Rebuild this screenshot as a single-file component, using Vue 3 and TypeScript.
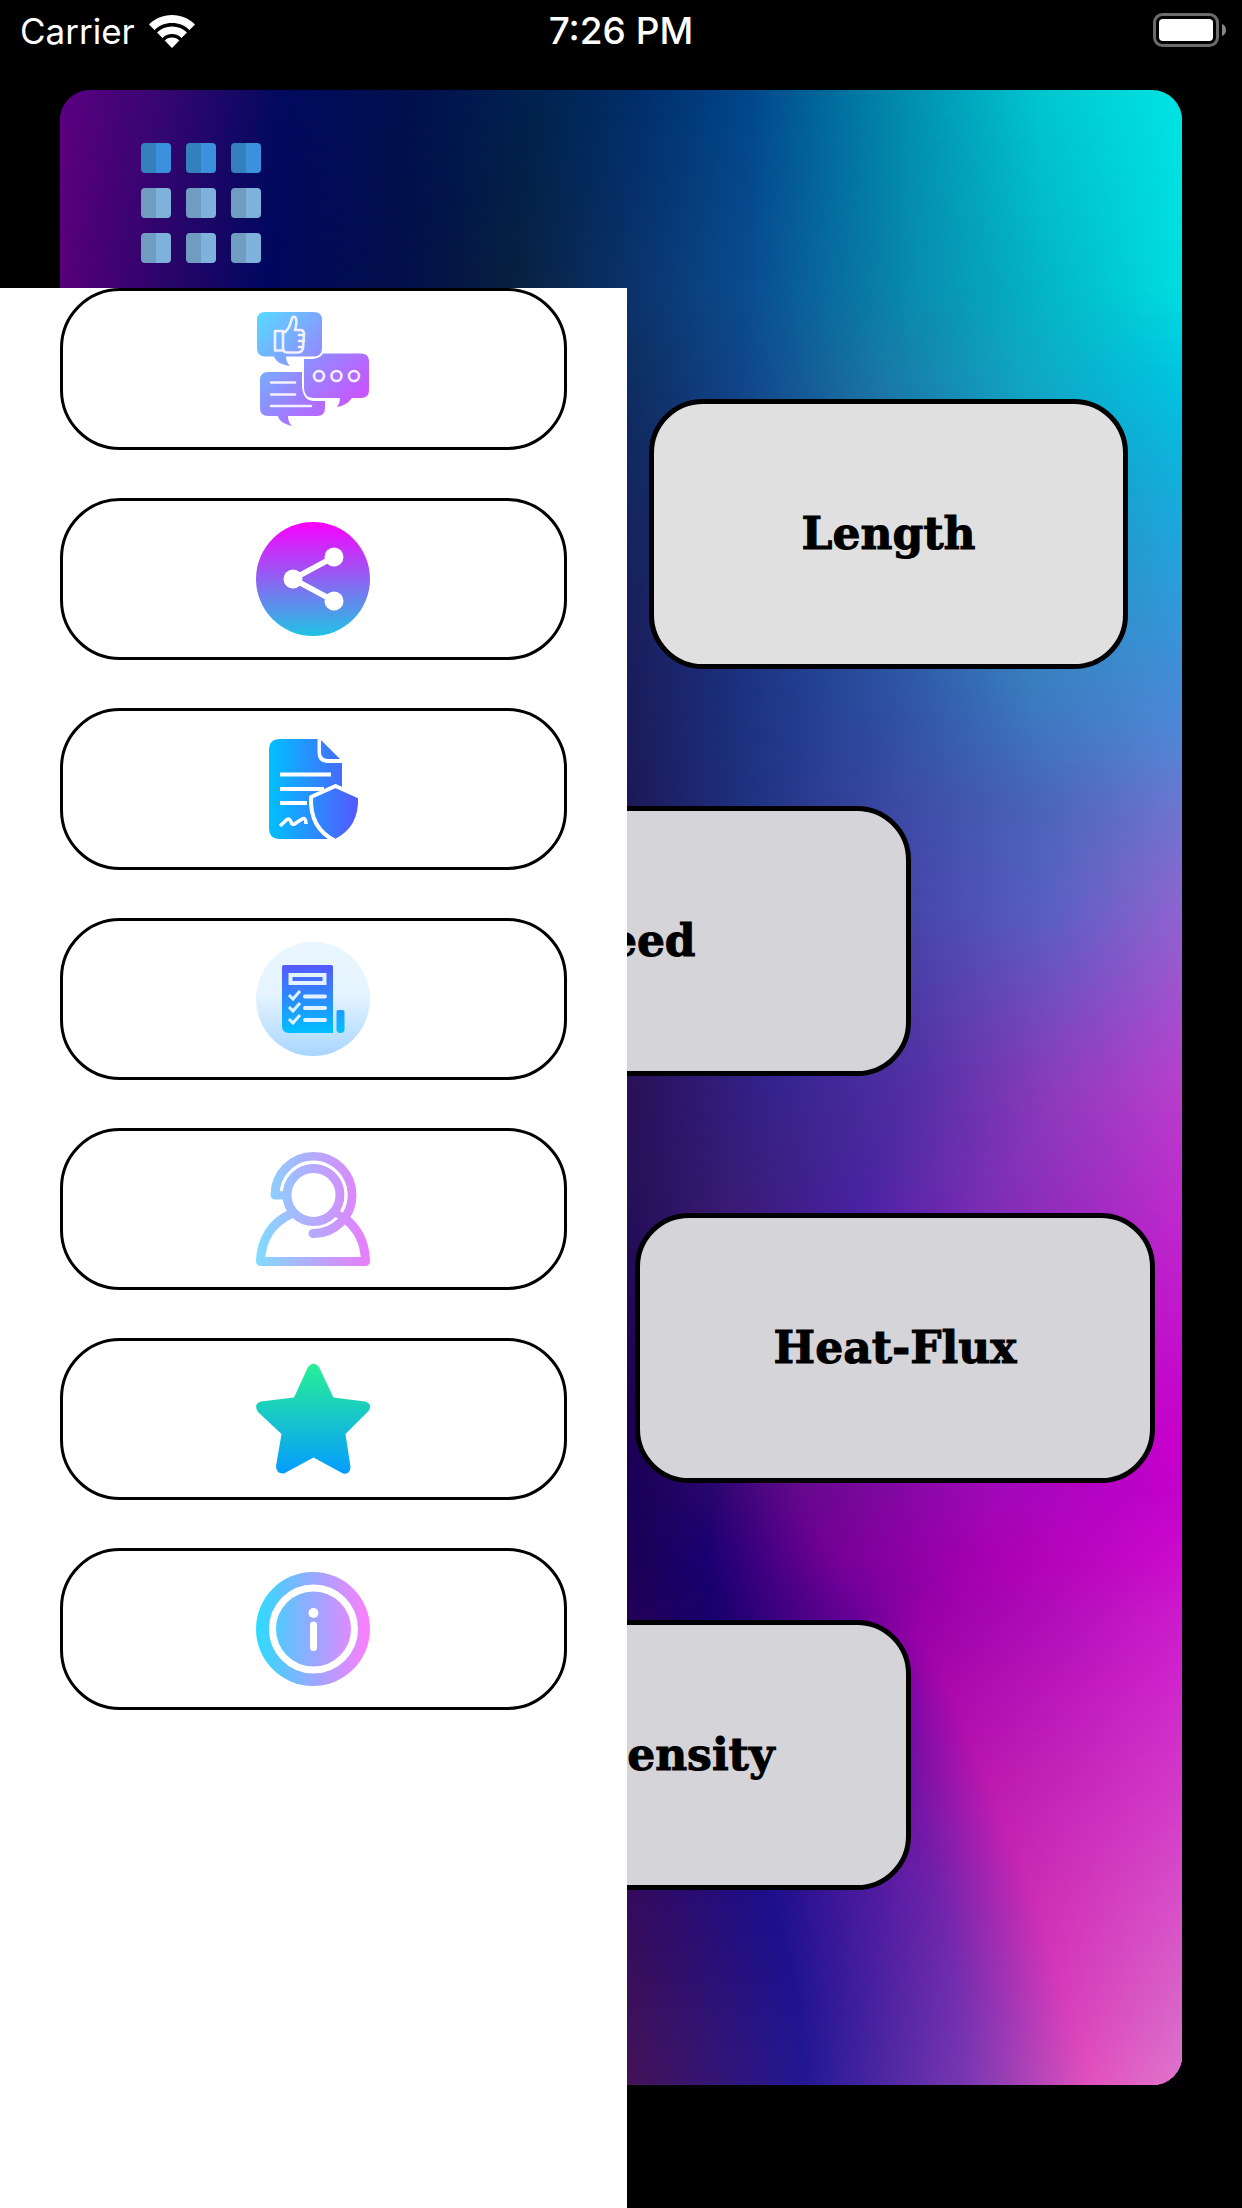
<script setup lang="ts">
type Stop = [x: number, color: string]

interface MeshRow {
  y: number
  stops: Stop[]
}

interface Unit {
  label: string
  place: string
}

const units: Unit[] = [
  { label: 'Length', place: 'first' },
  { label: 'Speed', place: 'middle' },
  { label: 'Heat-Flux', place: 'wide' },
  { label: 'Flux Density', place: 'middle' },
]

const menu = ['Feedback', 'Share', 'Privacy policy', 'Terms of use', 'Support', 'Rate us', 'About']

// Colour mesh behind the panel. Coordinates are relative to a 1122 x 1995 field;
// every row has ten stops, so both position and colour blend between rows.
const meshWidth = 1122
const meshHeight = 1995

const mesh: MeshRow[] = [
  { y: 0, stops: [[0, '#5c0082'], [100, '#380672'], [225, '#000a5e'], [350, '#00104d'], [480, '#00234f'], [590, '#00306f'], [690, '#00478a'], [850, '#0090b0'], [980, '#00c6cf'], [1122, '#00e4e4']] },
  { y: 198, stops: [[0, '#570078'], [100, '#2c056a'], [205, '#00085e'], [340, '#020f4a'], [450, '#08203f'], [567, '#0b326a'], [690, '#0a4d90'], [860, '#088eb0'], [980, '#04b4c4'], [1122, '#00dde0']] },
  { y: 290, stops: [[0, '#500070'], [100, '#28055f'], [205, '#040858'], [340, '#040f4a'], [440, '#08193f'], [567, '#0e2d60'], [680, '#10458a'], [820, '#1a78a6'], [970, '#10a8c4'], [1122, '#00c4e0']] },
  { y: 410, stops: [[0, '#480068'], [100, '#240558'], [205, '#0a0850'], [340, '#0c0f4a'], [440, '#101644'], [567, '#14255e'], [680, '#183c80'], [820, '#2564a4'], [970, '#2090c0'], [1122, '#16acdc']] },
  { y: 582, stops: [[0, '#400060'], [100, '#240450'], [205, '#10084a'], [340, '#120e4a'], [440, '#161448'], [567, '#1b1c5c'], [680, '#1b3280'], [840, '#2e55a6'], [970, '#3880be'], [1122, '#428ed8']] },
  { y: 650, stops: [[0, '#400060'], [100, '#240450'], [205, '#10084a'], [340, '#120e4a'], [440, '#161448'], [567, '#1b1b5a'], [690, '#1d3382'], [840, '#3350a6'], [980, '#4074c0'], [1122, '#5286d6']] },
  { y: 715, stops: [[0, '#400060'], [100, '#240450'], [205, '#10084a'], [340, '#120e4a'], [440, '#161448'], [567, '#1d1858'], [690, '#203282'], [840, '#3c4aa6'], [980, '#4a64ba'], [1122, '#6c76d0']] },
  { y: 820, stops: [[0, '#400060'], [100, '#240450'], [205, '#10084a'], [340, '#120c4a'], [440, '#161048'], [567, '#221458'], [690, '#263084'], [845, '#4545a8'], [985, '#5860c2'], [1122, '#8e64d0']] },
  { y: 1000, stops: [[0, '#400060'], [100, '#240450'], [205, '#10084a'], [340, '#120a4a'], [440, '#1a0c4c'], [567, '#2a1058'], [720, '#352490'], [860, '#5430a4'], [1000, '#903cbc'], [1122, '#b83ecc']] },
  { y: 1110, stops: [[0, '#400060'], [100, '#240450'], [205, '#10084a'], [340, '#120a4a'], [440, '#1a0c4c'], [567, '#241058'], [660, '#371b70'], [790, '#4422a0'], [930, '#7c2eb6'], [1122, '#be2ccc']] },
  { y: 1340, stops: [[0, '#300058'], [100, '#240450'], [205, '#10084a'], [340, '#120048'], [440, '#180048'], [567, '#1b0052'], [700, '#4c0c80'], [800, '#7010a0'], [950, '#a010b8'], [1122, '#c800cc']] },
  { y: 1400, stops: [[0, '#300058'], [100, '#240450'], [205, '#10084a'], [340, '#120048'], [440, '#180048'], [567, '#180055'], [650, '#28066f'], [730, '#62078b'], [930, '#a008b8'], [1122, '#c400cc']] },
  { y: 1470, stops: [[0, '#300058'], [100, '#240450'], [205, '#10084a'], [340, '#120048'], [440, '#180048'], [567, '#1c0054'], [645, '#180070'], [780, '#780098'], [940, '#ac00b4'], [1122, '#cc0ccc']] },
  { y: 1530, stops: [[0, '#300058'], [100, '#240450'], [205, '#10084a'], [340, '#120048'], [440, '#1c0050'], [567, '#220056'], [655, '#18006c'], [790, '#640095'], [850, '#9400a4'], [1122, '#cc1ccc']] },
  { y: 1600, stops: [[0, '#300058'], [100, '#240450'], [205, '#10084a'], [340, '#120048'], [440, '#1c0050'], [567, '#260058'], [670, '#180478'], [810, '#5404a0'], [890, '#ac08ac'], [1122, '#d028cc']] },
  { y: 1710, stops: [[0, '#300058'], [100, '#240450'], [205, '#18084a'], [340, '#1c0448'], [440, '#280450'], [567, '#2c0458'], [690, '#1a0882'], [860, '#7814a8'], [935, '#c01cb0'], [1122, '#d43cc8']] },
  { y: 1810, stops: [[0, '#300058'], [100, '#240450'], [205, '#20084a'], [340, '#240848'], [440, '#300850'], [567, '#350a5c'], [710, '#1c0f8c'], [880, '#7024ac'], [976, '#ce2cb5'], [1122, '#d850c8']] },
  { y: 1910, stops: [[0, '#300058'], [100, '#240450'], [205, '#20084a'], [340, '#280848'], [440, '#380c50'], [567, '#3c105a'], [735, '#20148f'], [900, '#7430b0'], [1006, '#d83cbb'], [1122, '#d864c8']] },
  { y: 1995, stops: [[0, '#300058'], [100, '#240450'], [205, '#20084a'], [340, '#2c0848'], [440, '#400c50'], [567, '#451358'], [745, '#231894'], [910, '#7c38b2'], [1032, '#e252bd'], [1122, '#de76cc']] },
]

function mixChannel(a: string, b: string, at: number, t: number): number {
  const from = parseInt(a.slice(at, at + 2), 16)
  const to = parseInt(b.slice(at, at + 2), 16)
  return Math.round(from + (to - from) * t)
}

function mix(a: string, b: string, t: number): string {
  return `rgb(${mixChannel(a, b, 1, t)}, ${mixChannel(a, b, 3, t)}, ${mixChannel(a, b, 5, t)})`
}

function gradientAt(y: number): string {
  let i = 0
  while (i < mesh.length - 2 && mesh[i + 1].y < y) i++
  const top = mesh[i]
  const bottom = mesh[i + 1]
  const t = (y - top.y) / (bottom.y - top.y)
  const stops = top.stops.map(([x, color], n) => {
    const [bx, bcolor] = bottom.stops[n]
    const at = ((x + (bx - x) * t) / meshWidth) * 100
    return `${mix(color, bcolor, t)} ${at.toFixed(2)}%`
  })
  return `linear-gradient(90deg, ${stops.join(', ')})`
}

const layerCount = 80
const layers = Array.from({ length: layerCount + 1 }, (_, i) => {
  const start = ((i - 1) / layerCount) * 100
  const end = (i / layerCount) * 100
  const fade = i === 0 ? 'none' : `linear-gradient(transparent ${start}%, #000 ${end}%)`
  return { backgroundImage: gradientAt((i / layerCount) * meshHeight), maskImage: fade }
})
</script>

<template>
  <div class="screen">
    <header class="status">
      <div class="carrier">
        <span>Carrier</span>
        <svg class="wifi" viewBox="0 0 46 33" aria-hidden="true">
          <path d="M23 0C32 0 40 3.500 46 9.500L40.500 15C36 10.500 30 8 23 8S10 10.500 5.500 15L0 9.500C6 3.500 14 0 23 0Z" />
          <path d="M23 11.500C29 11.500 34 13.700 38 17.500L32.500 23C30 20.600 26.800 19 23 19S16 20.600 13.500 23L8 17.500C12 13.700 17 11.500 23 11.500Z" />
          <path d="M23 22.500C26 22.500 28.500 23.600 30.300 25.400L23 33L15.700 25.400C17.500 23.600 20 22.500 23 22.500Z" />
        </svg>
      </div>
      <time class="clock">7:26 PM</time>
      <svg class="battery" viewBox="0 0 74 34" aria-hidden="true">
        <rect x="1.500" y="1.500" width="63" height="31" rx="8" fill="none" stroke="#6b6b6b" stroke-width="3" />
        <rect x="6" y="6" width="54" height="22" rx="4" fill="#fff" />
        <path d="M69 11C72 12 73 14.500 73 17S72 22 69 23Z" fill="#868686" />
      </svg>
    </header>

    <main class="panel">
      <div class="backdrop" aria-hidden="true">
        <div v-for="(layer, i) in layers" :key="i" class="layer" :style="layer"></div>
      </div>
      <button class="grid-button" type="button" aria-label="Menu">
        <span v-for="n in 9" :key="n" class="tile" :class="{ bright: n <= 3 }"></span>
      </button>
      <div class="units">
        <button v-for="unit in units" :key="unit.label" class="unit" :class="unit.place" type="button">
          {{ unit.label }}
        </button>
      </div>
    </main>

    <nav class="drawer" aria-label="App menu">
      <button v-for="(item, i) in menu" :key="item" class="entry" type="button" :aria-label="item">
        <svg v-if="i === 0" viewBox="0 0 114 114" aria-hidden="true">
          <defs>
            <linearGradient id="chat" gradientUnits="userSpaceOnUse" x1="0" y1="0" x2="110" y2="100">
              <stop offset="0" stop-color="#55dcff" />
              <stop offset="0.500" stop-color="#918cff" />
              <stop offset="1" stop-color="#d548ff" />
            </linearGradient>
          </defs>
          <g fill="url(#chat)">
            <path d="M9 0H58Q66 0 66 8V36Q66 44.500 58 44.500H30Q30 50 34 54C26 53 20 50 18 44.500H9Q1 44.500 1 36V8Q1 0 9 0Z" />
            <path d="M12 60H46V74Q47 89 58 89H69V96Q69 104 61 104H32Q32 110 36 114C28 112 23 109 22 104H12Q4 104 4 96V68Q4 60 12 60Z" />
            <path d="M48 47H57Q64 46 67 41.500H105Q113 41.500 113 49.500V78Q113 86 105 86H96Q90 94 81 95Q84 91 84 86H58Q48 86 48 76Z" />
          </g>
          <g fill="none" stroke="#f3f0ff" stroke-width="2.600" stroke-linecap="round" stroke-linejoin="round">
            <path d="M19 19H27V38.500H19Z" />
            <path d="M27 21C33 18 34 13 35.500 8Q36 4 39 5Q42 8 39 18H44Q48 18 48 22L47 36Q46 40.500 42 40.500H31Q27 40 27 37M48 23H43M48 29H43M47 35H43" />
            <path d="M15 70.500H39M15 82.500H39M15 94H55" />
            <circle cx="63" cy="64" r="5" />
            <circle cx="80.500" cy="64" r="5" />
            <circle cx="98" cy="64" r="5" />
          </g>
        </svg>

        <svg v-else-if="i === 1" viewBox="0 0 114 114" aria-hidden="true">
          <defs>
            <linearGradient id="share" x1="0" y1="0" x2="0" y2="1">
              <stop offset="0" stop-color="#fb00ff" />
              <stop offset="1" stop-color="#20c4e4" />
            </linearGradient>
          </defs>
          <circle cx="57" cy="57" r="57" fill="url(#share)" />
          <path d="M78 35L37 57L78 79" fill="none" stroke="#fff" stroke-width="5.500" />
          <g fill="#fff">
            <circle cx="37" cy="57" r="9.500" />
            <circle cx="78" cy="35" r="9.500" />
            <circle cx="78" cy="79" r="9.500" />
          </g>
        </svg>

        <svg v-else-if="i === 2" viewBox="0 0 114 114" aria-hidden="true">
          <defs>
            <linearGradient id="policy" gradientUnits="userSpaceOnUse" x1="13" y1="0" x2="102" y2="0">
              <stop offset="0" stop-color="#00c0ff" />
              <stop offset="1" stop-color="#5558ff" />
            </linearGradient>
          </defs>
          <g fill="url(#policy)">
            <path d="M24 7H61.500V20Q61.500 31 72 31H86V107H24Q13 107 13 96V18Q13 7 24 7Z" />
            <path d="M65 8L84 27H72Q65 27 65 20Z" />
          </g>
          <g fill="none" stroke="#fff" stroke-width="4">
            <path d="M24 42.500H75M24 57H68M24 71H51" />
            <path d="M24 94L31 87.500Q34 86 35 90T40 91L46 87Q50 85 50 92" stroke-width="3.500" />
          </g>
          <path d="M79.500 54L104 65C105 86 96 101 79.500 109C63 101 54 86 55 65Z" fill="url(#policy)" stroke="#fff" stroke-width="4" stroke-linejoin="round" />
        </svg>

        <svg v-else-if="i === 3" viewBox="0 0 114 114" aria-hidden="true">
          <defs>
            <linearGradient id="disc" x1="0" y1="0" x2="0" y2="1">
              <stop offset="0" stop-color="#e9f6ff" />
              <stop offset="0.450" stop-color="#e6f4ff" />
              <stop offset="1" stop-color="#a8d6ff" />
            </linearGradient>
            <linearGradient id="terms" gradientUnits="userSpaceOnUse" x1="0" y1="23" x2="0" y2="91">
              <stop offset="0" stop-color="#5558ff" />
              <stop offset="1" stop-color="#00c0ff" />
            </linearGradient>
          </defs>
          <circle cx="57" cy="57" r="57" fill="url(#disc)" />
          <path d="M26 25Q26 23 28 23H75Q77 23 77 25V91H33Q26 91 26 84Z" fill="url(#terms)" />
          <path d="M80.500 70Q80.500 68 82.500 68H86.500Q88.500 68 88.500 70V87Q88.500 91 84.500 91T80.500 87Z" fill="url(#terms)" />
          <g fill="none" stroke="#e2f2ff" stroke-width="4">
            <rect x="34.500" y="33" width="34" height="8" />
            <path d="M49 54.500H69M49 66H69M49 78H69" stroke-linecap="round" />
            <path d="M33 53L37 57L44 49M33 65L37 69L44 61M33 77L37 81L44 73" stroke-width="3" />
          </g>
        </svg>

        <svg v-else-if="i === 4" viewBox="0 0 114 114" aria-hidden="true">
          <defs>
            <linearGradient id="agent" gradientUnits="userSpaceOnUse" x1="0" y1="0" x2="114" y2="0">
              <stop offset="0" stop-color="#7fdcff" />
              <stop offset="0.500" stop-color="#b4aaff" />
              <stop offset="1" stop-color="#ea7cfc" />
            </linearGradient>
          </defs>
          <g fill="none" stroke="url(#agent)" stroke-width="9" stroke-linejoin="round">
            <circle cx="57.500" cy="43" r="26.500" />
            <path d="M29 43H19A38.500 38.500 0 1 1 57.500 81.500" />
            <path d="M57.500 81.500H57" stroke-linecap="round" />
            <path d="M80 61L92 67" stroke-width="8" />
            <path d="M35 62C16 70 5 88 4.500 109.500H109.500C109 91 102 76 88 66" />
          </g>
          <path d="M25.500 38C28 22 41 10 57.500 10A33 33 0 0 1 86 59" fill="none" stroke="#fff" stroke-width="2.800" stroke-linecap="round" />
        </svg>

        <svg v-else-if="i === 5" viewBox="0 0 114 114" aria-hidden="true">
          <defs>
            <linearGradient id="star" x1="0" y1="0" x2="0" y2="1">
              <stop offset="0" stop-color="#28f094" />
              <stop offset="1" stop-color="#059cff" />
            </linearGradient>
          </defs>
          <path d="M52 5Q57.500 -2 63 5L77.500 35.500L109 39.500Q117 42 112.500 49L89.500 72L94.500 105Q94 113 87 111.500L57.500 95.500L28 111.500Q20 112 20 104L25.500 72L2 50Q-3 42 5 39.500L38 35.500Z" fill="url(#star)" />
        </svg>

        <svg v-else viewBox="0 0 114 114" aria-hidden="true">
          <defs>
            <linearGradient id="info">
              <stop offset="0" stop-color="#2cdcff" />
              <stop offset="0.500" stop-color="#98a8ff" />
              <stop offset="1" stop-color="#ff7eff" />
            </linearGradient>
          </defs>
          <circle cx="57" cy="57" r="57" fill="url(#info)" />
          <circle cx="57.500" cy="57" r="41" fill="none" stroke="#fff" stroke-width="7" />
          <circle cx="57.500" cy="41" r="5" fill="#fff" />
          <path d="M57.500 53V75.500" stroke="#fff" stroke-width="7" stroke-linecap="round" />
        </svg>
      </button>
    </nav>
  </div>
</template>

<style>
body {
  margin: 0;
  background: #000;
}
</style>

<style scoped>
.screen {
  position: relative;
  box-sizing: border-box;
  min-height: 100vh;
  padding: 0 60px 123px;
  background: #000;
}

button {
  box-sizing: border-box;
  margin: 0;
  padding: 0;
  font: inherit;
  cursor: pointer;
}

.status {
  display: grid;
  grid-template-columns: 1fr auto 1fr;
  align-items: start;
  height: 90px;
  margin: 0 -40px;
  color: #fff;
  font: 35px/62px Inter, "Liberation Sans", sans-serif;
}

.carrier {
  display: flex;
  align-items: center;
  gap: 14px;
}

.wifi {
  width: 46px;
  height: 33px;
  fill: #fff;
}

.clock {
  font-size: 37px;
  font-weight: 500;
}

.battery {
  justify-self: end;
  width: 74px;
  height: 34px;
  margin: 13px -5px 0 0;
}

.panel {
  position: relative;
  overflow: hidden;
  padding: 53px 0 195px;
  border-radius: 30px;
}

.backdrop,
.layer {
  position: absolute;
  inset: 0;
}

.grid-button {
  position: relative;
  display: grid;
  grid-template-columns: repeat(3, 30px);
  gap: 15px;
  margin-left: 81px;
  border: 0;
  background: none;
}

.tile {
  height: 30px;
  border-radius: 4px;
  background: linear-gradient(90deg, #709cc2 50%, #7eb1db 50%);
}

.tile.bright {
  background: linear-gradient(90deg, #3380bd 50%, #3b91db 50%);
}

.units {
  position: relative;
  display: flex;
  flex-direction: column;
  gap: 137px;
  margin-top: 136px;
}

.unit {
  height: 270px;
  border: 5px solid #000;
  border-radius: 54px;
  background: #d5d4d9;
  color: #000;
  font: bold 44px/60px "DejaVu Serif", serif;
  -webkit-text-stroke: 1px #000;
}

.unit.first {
  align-self: flex-end;
  width: calc(50% - 82px);
  margin-right: 54px;
  background: #e0e0e0;
}

.unit.middle {
  align-self: center;
  width: calc(50% + 19px);
}

.unit.wide {
  align-self: flex-end;
  width: calc(50% - 41px);
  margin-right: 27px;
}

.drawer {
  position: absolute;
  top: 288px;
  bottom: 0;
  left: 0;
  box-sizing: border-box;
  width: calc(50% + 6px);
  display: flex;
  flex-direction: column;
  gap: 48px;
  padding: 0 60px;
  background: #fff;
}

.entry {
  display: flex;
  align-items: center;
  justify-content: center;
  height: 162px;
  padding-right: 1px;
  border: 3px solid #000;
  border-radius: 60px;
  background: #fff;
}

.entry svg {
  width: 114px;
  height: 114px;
}
</style>
